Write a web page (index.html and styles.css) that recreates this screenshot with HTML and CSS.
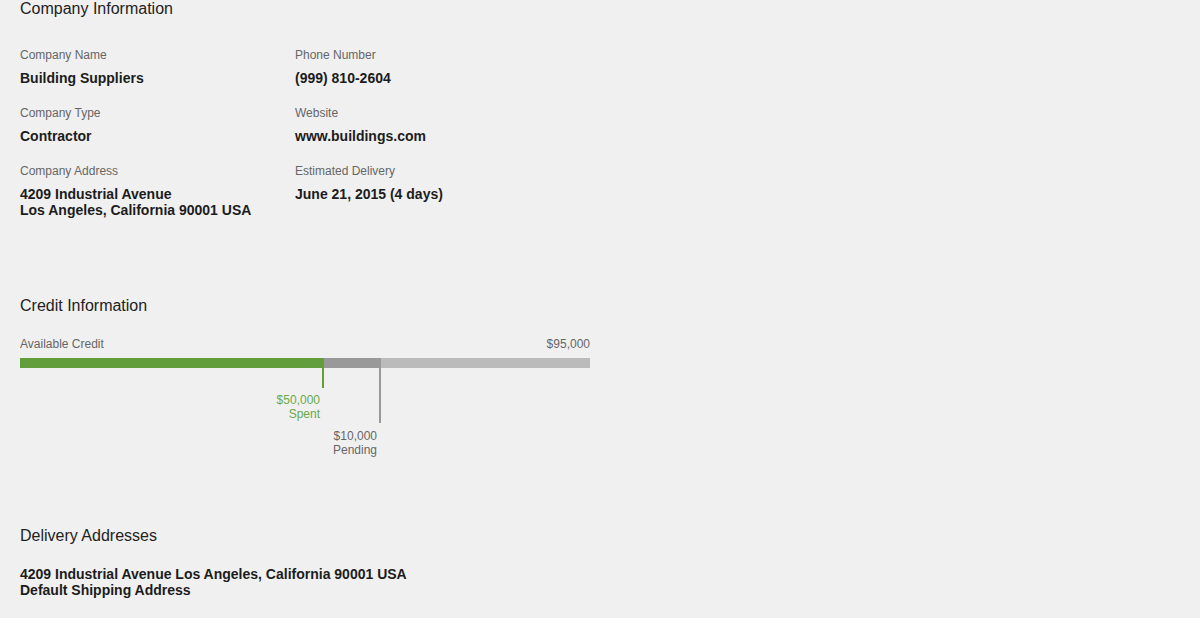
FILE: index.html
```html
<!DOCTYPE html>
<html>
<head>
<meta charset="utf-8">
<link rel="stylesheet" href="styles.css">
</head>
<body>
<div class="page">
  <section class="section company">
    <h2 class="heading">Company Information</h2>
    <div class="info-grid">
      <div class="field">
        <div class="label">Company Name</div>
        <div class="value">Building Suppliers</div>
      </div>
      <div class="field">
        <div class="label">Phone Number</div>
        <div class="value">(999) 810-2604</div>
      </div>
      <div class="field">
        <div class="label">Company Type</div>
        <div class="value">Contractor</div>
      </div>
      <div class="field">
        <div class="label">Website</div>
        <div class="value">www.buildings.com</div>
      </div>
      <div class="field">
        <div class="label">Company Address</div>
        <div class="value">4209 Industrial Avenue<br>Los Angeles, California 90001 USA</div>
      </div>
      <div class="field">
        <div class="label">Estimated Delivery</div>
        <div class="value">June 21, 2015 (4 days)</div>
      </div>
    </div>
  </section>

  <section class="section credit">
    <h2 class="heading">Credit Information</h2>
    <div class="credit-head">
      <span class="label">Available Credit</span>
      <span class="label">$95,000</span>
    </div>
    <div class="bar">
      <div class="seg seg-spent" style="width: 304px">
        <div class="marker marker-spent">
          <div class="tick tick-spent"></div>
          <div class="marker-text">$50,000<br>Spent</div>
        </div>
      </div>
      <div class="seg seg-pending" style="width: 57px">
        <div class="marker marker-pending">
          <div class="tick tick-pending"></div>
          <div class="marker-text">$10,000<br>Pending</div>
        </div>
      </div>
      <div class="seg seg-rest"></div>
    </div>
  </section>

  <section class="section delivery">
    <h2 class="heading">Delivery Addresses</h2>
    <div class="value">4209 Industrial Avenue Los Angeles, California 90001 USA<br>Default Shipping Address</div>
  </section>
</div>
</body>
</html>
```

FILE: styles.css
```css
html, body {
  margin: 0;
  padding: 0;
  background: #f0f0f0;
}

body {
  font-family: "Liberation Sans", Arial, sans-serif;
  color: #222;
}

.page {
  padding: 1px 20px 0;
  width: 570px;
}

.heading {
  margin: 0;
  font-size: 16px;
  line-height: 16px;
  font-weight: normal;
  color: #222;
}

.label {
  font-size: 12px;
  line-height: 14px;
  color: #666;
}

.value {
  font-size: 14px;
  line-height: 16px;
  font-weight: bold;
  color: #1c1c1c;
}

.info-grid {
  margin-top: 31px;
  display: grid;
  grid-template-columns: 275px 275px;
  row-gap: 20px;
}

.field {
  display: flex;
  flex-direction: column;
  gap: 8px;
}

.credit {
  margin-top: 80px;
  height: 230px;
}

.credit-head {
  margin-top: 23px;
  display: flex;
  justify-content: space-between;
}

.bar {
  margin-top: 7px;
  display: flex;
  height: 10px;
}

.seg {
  position: relative;
  height: 10px;
}

.seg-spent {
  background: #629e3b;
}

.seg-pending {
  background: #999999;
}

.seg-rest {
  flex: 1;
  background: #bbbbbb;
}

.marker {
  position: absolute;
  right: 0;
  top: 100%;
  display: flex;
  flex-direction: column;
  align-items: flex-end;
}

.tick {
  width: 2px;
}

.tick-spent {
  height: 20px;
  background: #629e3b;
}

.tick-pending {
  height: 55px;
  background: #999999;
}

.marker-text {
  margin-top: 5px;
  margin-right: 4px;
  font-size: 12px;
  line-height: 14px;
  text-align: right;
  white-space: nowrap;
}

.marker-spent .marker-text {
  color: #6aa84a;
}

.marker-pending .marker-text {
  margin-top: 6px;
  color: #666;
}

.delivery .value {
  margin-top: 22px;
}
```
